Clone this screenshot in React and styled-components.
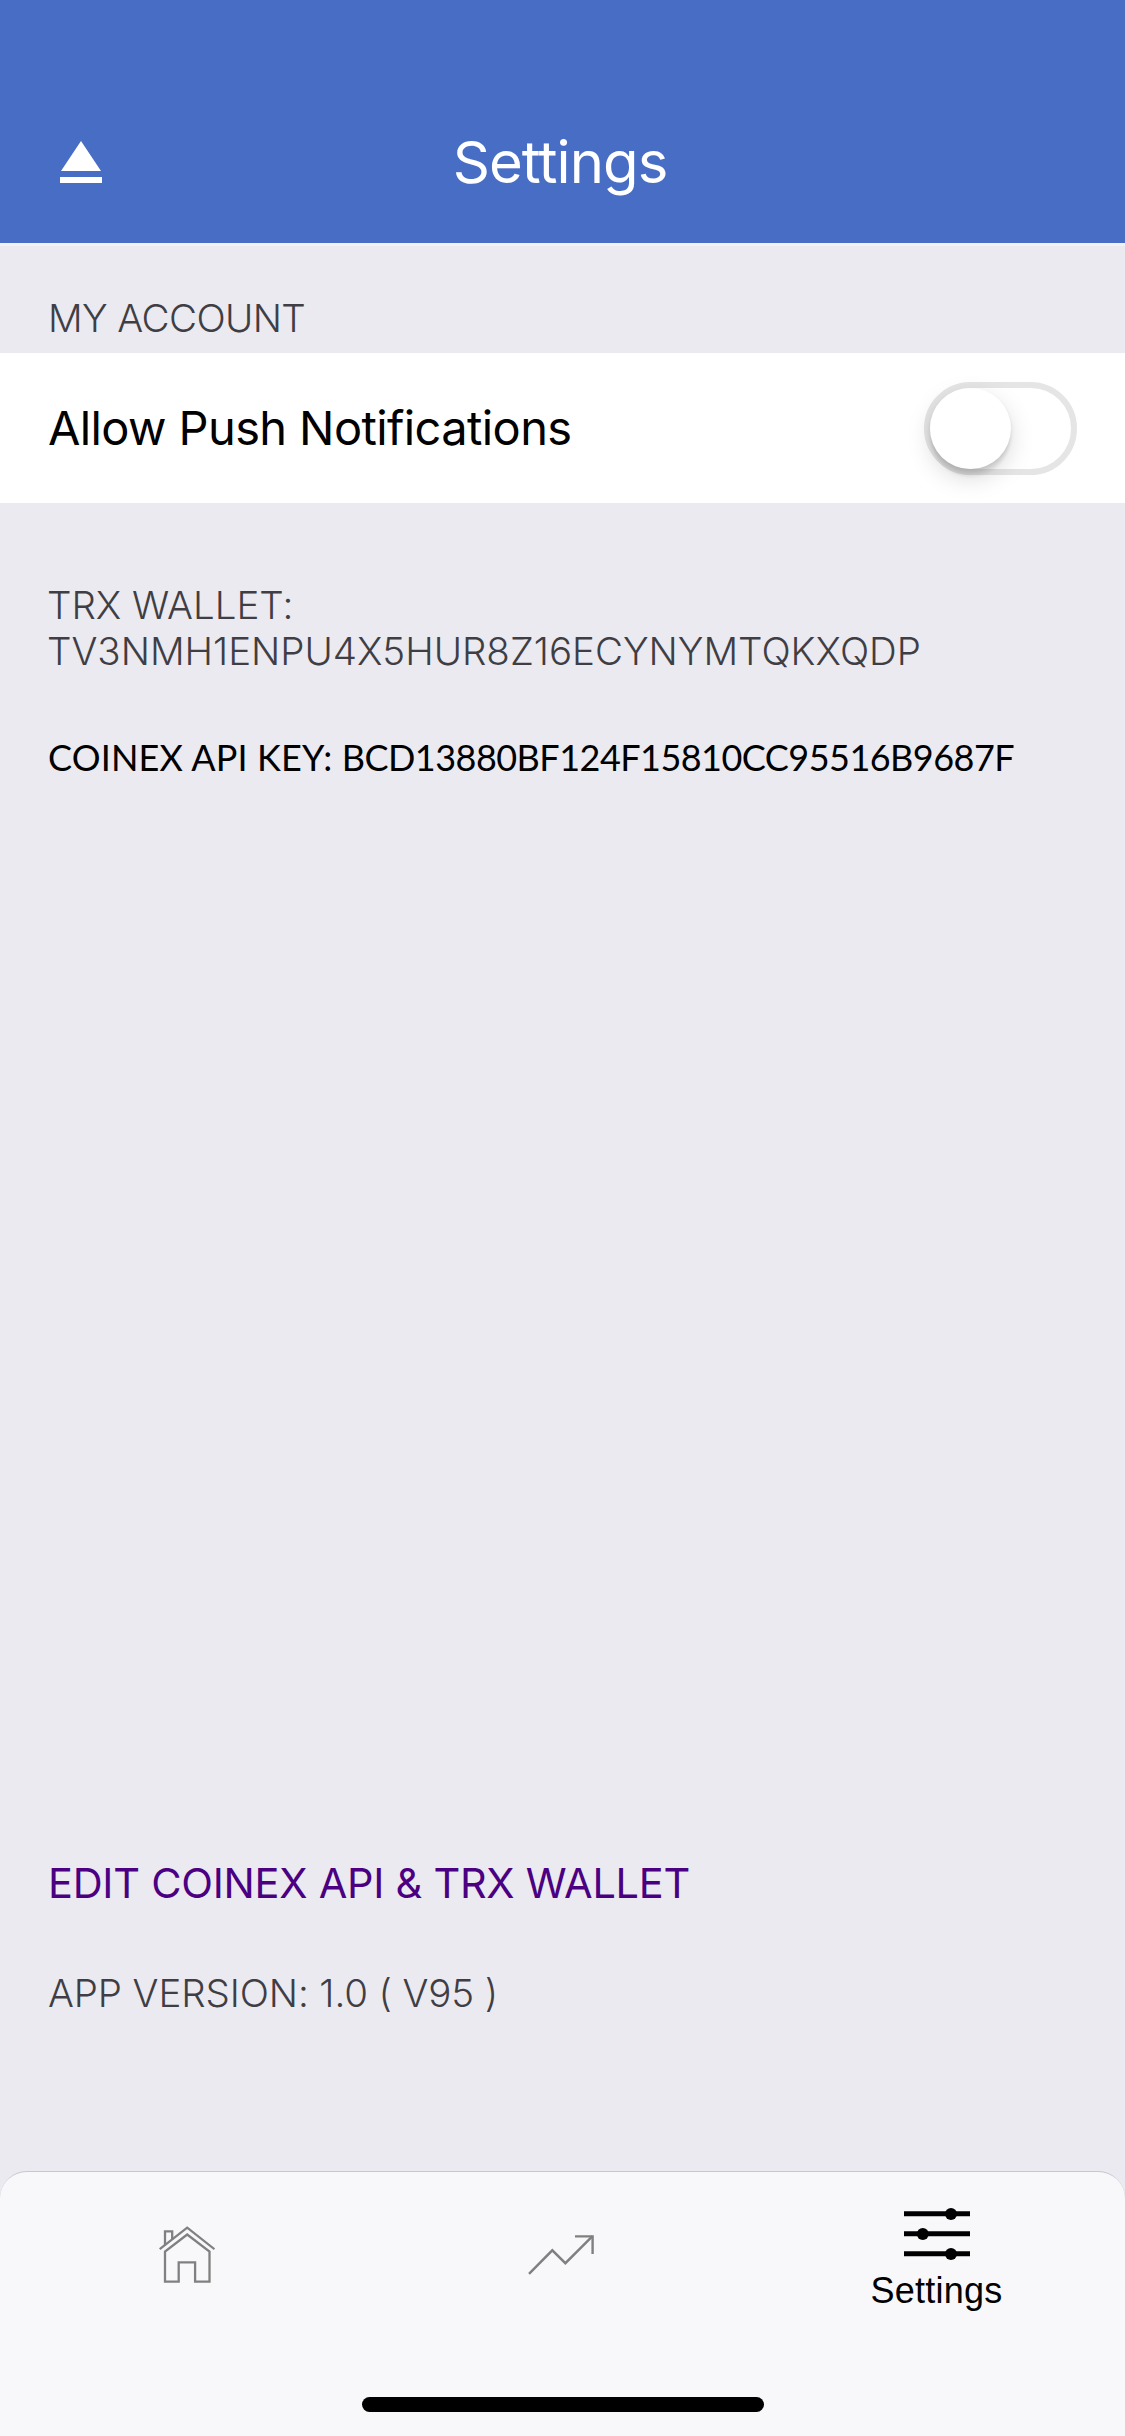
import React, { useState } from "react";
import styled, { createGlobalStyle } from "styled-components";

const GlobalStyle = createGlobalStyle`
  * { box-sizing: border-box; }
  body {
    margin: 0;
    background: #ebeaf0;
    font-family: Inter, "Liberation Sans", sans-serif;
  }
`;

const Screen = styled.div`
  display: flex;
  flex-direction: column;
  width: 1125px;
  height: 2436px;
  background: #ebeaf0;
  overflow: hidden;
`;

const Header = styled.header`
  display: grid;
  grid-template-columns: 1fr auto 1fr;
  align-items: center;
  align-content: start;
  flex: none;
  height: 246px;
  padding: 132px 60px 0;
  background: #486dc5;
  border-bottom: 3px solid #f2f2f5;
`;

const IconButton = styled.button`
  display: flex;
  justify-self: start;
  padding: 0;
  border: 0;
  background: none;
  color: #fff;
`;

const Title = styled.h1`
  margin: 0 5px 0 0;
  font-size: 58px;
  font-weight: 400;
  line-height: 60px;
  letter-spacing: -0.92px;
  color: #fff;
`;

const Content = styled.main`
  display: flex;
  flex-direction: column;
  flex: 1;
`;

const Caption = styled.h2`
  margin: 0;
  padding: ${(p) => p.$pad || "0 48px"};
  font-size: 38.5px;
  font-weight: 300;
  line-height: 46px;
  letter-spacing: ${(p) => p.$tracking || "0"};
  color: #3f3e44;
`;

const SettingRow = styled.div`
  display: flex;
  align-items: center;
  justify-content: space-between;
  height: 150px;
  padding: 0 48px;
  background: #fff;
`;

const RowLabel = styled.span`
  font-size: 47px;
  line-height: 58px;
  letter-spacing: -0.61px;
  color: #000;
`;

const Switch = styled.button`
  display: flex;
  justify-content: ${(p) => (p.$on ? "flex-end" : "flex-start")};
  width: 153px;
  height: 93px;
  padding: 0;
  border: 6px solid ${(p) => (p.$on ? "#4cd964" : "#e5e5e5")};
  border-radius: 47px;
  background: ${(p) => (p.$on ? "#4cd964" : "#fff")};
`;

const Knob = styled.span`
  width: 81px;
  height: 81px;
  border-radius: 50%;
  background: #fff;
  box-shadow: 0 9px 24px rgba(0, 0, 0, 0.15), 0 9px 3px -1px rgba(0, 0, 0, 0.05),
    0 3px 4px rgba(0, 0, 0, 0.1);
`;

const Details = styled.section`
  display: flex;
  flex-direction: column;
  gap: 61px;
  padding-top: 79px;
`;

const ApiKey = styled.p`
  margin: 0;
  padding: 0 48px;
  font-family: Lato, "Liberation Sans", sans-serif;
  font-size: 36px;
  line-height: 44px;
  letter-spacing: 0.15px;
  white-space: nowrap;
  color: #000;
`;

const KeyValue = styled.span`
  letter-spacing: -0.53px;
`;

const Footer = styled.section`
  display: flex;
  flex-direction: column;
  gap: 62px;
  margin-top: auto;
  padding-bottom: 155px;
`;

const EditLink = styled.a`
  padding: 0 48px;
  font-size: 41.5px;
  line-height: 50px;
  letter-spacing: -0.27px;
  color: #4b0082;
`;

const TabBar = styled.nav`
  display: flex;
  flex-direction: column;
  align-items: center;
  justify-content: space-between;
  flex: none;
  height: 265px;
  padding-bottom: 24px;
  border-top: 1px solid #c8c7cc;
  border-radius: 27px 27px 0 0;
  background: #f8f8fb;
`;

const Tabs = styled.div`
  display: grid;
  grid-template-columns: repeat(3, 375px);
`;

const Tab = styled.a`
  display: flex;
  flex-direction: column;
  align-items: center;
  gap: 9px;
  padding: ${(p) => (p.$active ? 35 : 54)}px 2px 0 0;
  color: ${(p) => (p.$active ? "#000" : "#808080")};
`;

const TabLabel = styled.span`
  font-family: "Liberation Sans", sans-serif;
  font-size: 36px;
  line-height: 42px;
  letter-spacing: 0.27px;
`;

const HomeIndicator = styled.div`
  width: 402px;
  height: 15px;
  border-radius: 8px;
  background: #000;
`;

const EjectIcon = () => (
  <svg width="42" height="42" viewBox="0 0 42 42" fill="currentColor">
    <path d="M21 0 41 30H1z" />
    <path d="M0 36h42v6H0z" />
  </svg>
);

const HouseIcon = () => (
  <svg width="56" height="57" viewBox="0 0 56 57" fill="none" stroke="currentColor" strokeWidth="2.3">
    <path d="M.7 23.2 28.2 1.7 55.5 23.2" />
    <path d="M6 19V5.3h7.2v8" />
    <path d="M6 25.6V55.6h13.7V36.3h16.4v19.3H50.5V25.6L28.2 8.5z" />
  </svg>
);

const TrendIcon = () => (
  <svg width="68" height="57" viewBox="0 0 68 57" fill="none" stroke="currentColor" strokeWidth="2.4">
    <path d="M1 47.8 24.3 24.3 37.4 37.2 64.5 10.2" />
    <path d="M47 10.4H64.6V28" />
  </svg>
);

const SlidersIcon = () => (
  <svg width="66" height="54" viewBox="0 0 66 54" fill="currentColor">
    <path d="M0 4.3h66v5H0zM0 24.3h66v5H0zM0 44.3h66v5H0z" />
    <circle cx="47" cy="6.9" r="6" />
    <circle cx="18.8" cy="26.9" r="6" />
    <circle cx="47" cy="46.9" r="6" />
  </svg>
);

export default function App() {
  const [push, setPush] = useState(false);
  return (
    <Screen>
      <GlobalStyle />
      <Header>
        <IconButton aria-label="Eject"><EjectIcon /></IconButton>
        <Title>Settings</Title>
      </Header>
      <Content>
        <Caption $pad="49px 48px 12px" $tracking="-0.6px">MY ACCOUNT</Caption>
        <SettingRow>
          <RowLabel>Allow Push Notifications</RowLabel>
          <Switch $on={push} role="switch" aria-checked={push} onClick={() => setPush(!push)}>
            <Knob />
          </Switch>
        </SettingRow>
        <Details>
          <Caption $pad="0 47px" $tracking="-0.02px">
            TRX WALLET:
            <br />
            TV3NMH1ENPU4X5HUR8Z16ECYNYMTQKXQDP
          </Caption>
          <ApiKey>
            COINEX API KEY: <KeyValue>BCD13880BF124F15810CC95516B9687F</KeyValue>
          </ApiKey>
        </Details>
        <Footer>
          <EditLink>EDIT COINEX API &amp; TRX WALLET</EditLink>
          <Caption $tracking="-0.12px">APP VERSION: 1.0 ( V95 )</Caption>
        </Footer>
      </Content>
      <TabBar>
        <Tabs>
          <Tab><HouseIcon /></Tab>
          <Tab><TrendIcon /></Tab>
          <Tab $active><SlidersIcon /><TabLabel>Settings</TabLabel></Tab>
        </Tabs>
        <HomeIndicator />
      </TabBar>
    </Screen>
  );
}
